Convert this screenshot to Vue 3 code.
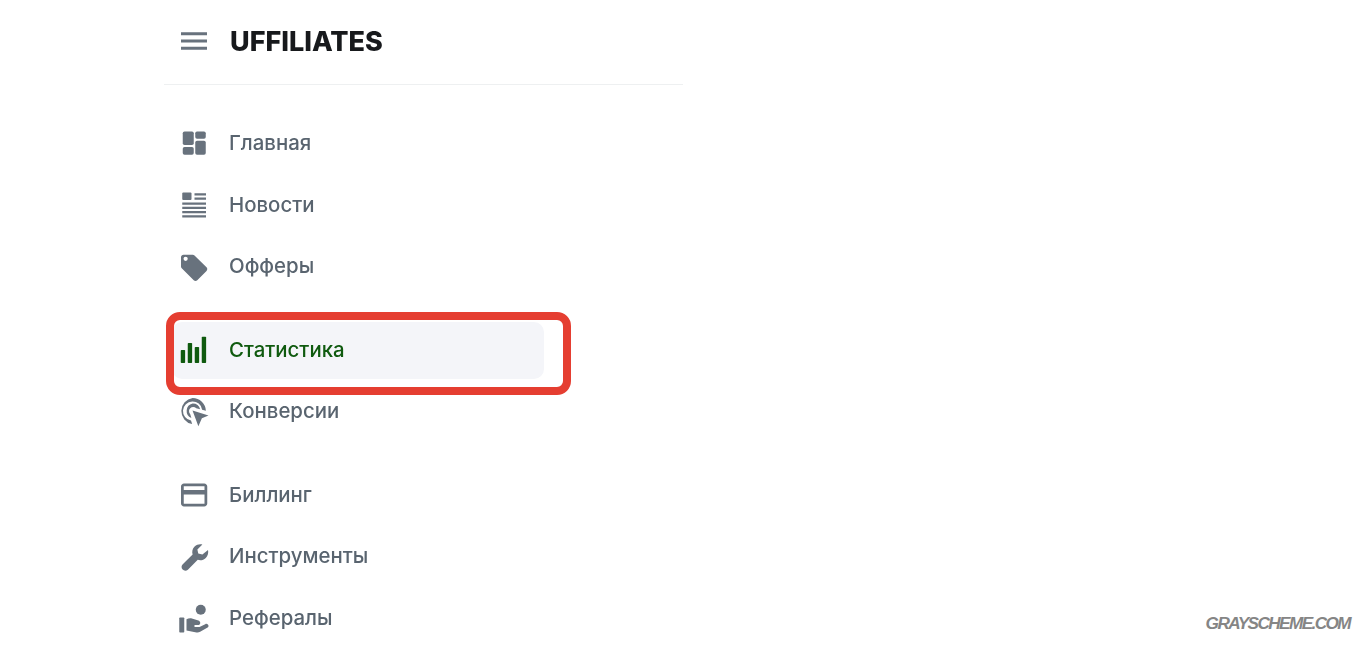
<template>
  <div class="page">
    <aside class="sidebar">
      <header class="top">
        <svg class="burger" viewBox="0 0 26 18" width="26" height="18">
          <path d="M0 1.800h26M0 9h26M0 16.200h26" stroke="#68727d" stroke-width="3" />
        </svg>
        <span class="logo">UFFILIATES</span>
      </header>

      <nav class="nav">
        <div v-for="(group, i) in groups" :key="i" class="group">
          <div
            v-for="item in group"
            :key="item.label"
            class="item"
            :class="{ active: item.active }"
          >
            <svg class="icon" viewBox="0 0 24 24" width="30" height="30" v-html="item.icon"></svg>
            <span>{{ item.label }}</span>
            <div v-if="item.active" class="frame"></div>
          </div>
        </div>
      </nav>
    </aside>
    <div class="mark">GRAYSCHEME.COM</div>
  </div>
</template>

<script setup>
const groups = [
  [
    {
      label: 'Главная',
      icon: '<rect x="3" y="2" width="8.800" height="10.800" rx="1.400"/><rect x="13" y="2" width="8.400" height="5.800" rx="1.400"/><rect x="3" y="14.400" width="8.800" height="6.200" rx="1.400"/><rect x="13" y="9.400" width="8.400" height="11.200" rx="1.400"/>'
    },
    {
      label: 'Новости',
      icon: '<rect x="2.600" y="2" width="7.400" height="6" rx=".8"/><path d="M12.400 2.600h9.200v1.800h-9.200zM12.400 6h9.200v1.800h-9.200zM2.600 10h19v1.800h-19zM2.600 13.400h19v1.800h-19zM2.600 16.800h19v1.800h-19zM2.600 20.200h19V22h-19z"/>'
    },
    {
      label: 'Офферы',
      icon: '<path d="M22 12.200 12.400 2.700c-.4-.4-.9-.6-1.400-.6H3.600C2.500 2.100 1.600 3 1.600 4.100v7.400c0 .5.2 1 .6 1.400l9.600 9.600c.4.4.9.6 1.400.6s1-.2 1.400-.6l7.400-7.400c.8-.8.8-2.100 0-2.900zM5.300 7.100a1.700 1.700 0 1 1 0-3.400 1.700 1.700 0 0 1 0 3.400z"/>'
    }
  ],
  [
    {
      label: 'Статистика',
      active: true,
      icon: '<rect x="1.400" y="12" width="3.500" height="10.400" rx=".6"/><rect x="7" y="6.400" width="3.500" height="16" rx=".6"/><rect x="12.600" y="9.600" width="3.500" height="12.800" rx=".6"/><rect x="18.200" y="1.400" width="3.500" height="21" rx=".6"/>'
    },
    {
      label: 'Конверсии',
      icon: '<path d="M10.900.8a10.600 10.600 0 0 1 10.600 10.200l-3-.9a7.700 7.700 0 1 0-8.900 8.700l.9 2.900A10.600 10.600 0 0 1 10.900.8z"/><path d="M10.900 5.200a6.100 6.100 0 0 1 6 4.600l-3.100-.9a3.200 3.200 0 1 0-4.800 4.800l.9 3.100a6.100 6.100 0 0 1 1-11.600z"/><path d="m10.800 10.800 12.800 3.900-5.300 2.300-2.800 6.400z"/>'
    }
  ],
  [
    {
      label: 'Биллинг',
      icon: '<path fill-rule="evenodd" d="M4 2.800h16.200c1.300 0 2.400 1.100 2.400 2.400v13.600c0 1.300-1.100 2.400-2.400 2.400H4c-1.300 0-2.400-1.100-2.400-2.400V5.200c0-1.300 1.100-2.400 2.400-2.400zm-.2 2.200v3h16.600V5zm0 6.600v7.400h16.600v-7.400z"/>'
    },
    {
      label: 'Инструменты',
      icon: '<path d="M23.200 6.400c.5 2.200-.1 4.600-1.800 6.300-1.800 1.800-4.300 2.300-6.400 1.500l-7.900 7.900c-1.200 1.100-3.100 1.100-4.200-.1-1.200-1.200-1.100-3.100.1-4.200l7.900-7.800c-.7-2.200-.2-4.700 1.600-6.400C14.200 1.900 16.500 1.400 18.700 1.900l-4 4 .7 3.300 3.300.7z"/>'
    },
    {
      label: 'Рефералы',
      icon: '<circle cx="17.400" cy="5.400" r="4"/><rect x=".2" y="11.600" width="4" height="12" rx=".6"/><path d="M6 12.400v9.700l8 1.500c1 .2 2 0 2.900-.5l6-3.400c.8-.5 1-1.700.2-2.500-.6-.6-1.400-.7-2.100-.3l-4.600 2.200h-4v-1.500h2.800c1.100 0 1.800-.8 1.800-1.700s-.7-1.600-1.500-1.900l-5.200-1.700c-1.400-.4-2.900-.1-4.300.7z"/>'
    }
  ]
]
</script>

<style>
html,
body {
  background: #fff;
}
</style>

<style scoped>
.page {
  position: relative;
  height: 654px;
  overflow: hidden;
  background: #fff;
  font-family: Inter, "Noto Sans", sans-serif;
}

.sidebar {
  width: 519px;
  margin-left: 164px;
}

.top {
  display: flex;
  align-items: center;
  height: 85px;
  padding: 0 0 2px 17px;
  box-sizing: border-box;
  border-bottom: 1.5px solid #eef0f1;
}

.burger {
  margin-right: 22px;
}

.logo {
  margin-left: 1px;
  font-size: 27px;
  font-weight: 800;
  letter-spacing: 0;
  color: #17191c;
  filter: blur(0.5px);
}

.nav {
  width: 372px;
  padding: 30px 0 0 8px;
}

.group {
  display: flex;
  flex-direction: column;
  gap: 4px;
  margin-bottom: 26px;
}

.item {
  position: relative;
  display: flex;
  align-items: center;
  height: 57.5px;
  padding-left: 7px;
  border-radius: 10px;
  font-size: 20.4px;
  font-weight: 500;
  color: #59646f;
}

.item span {
  margin: 0 0 2px 20px;
  filter: blur(0.4px);
}

.icon {
  flex: none;
  fill: #68727d;
  filter: blur(0.4px);
}

.active {
  background: #f4f5f9;
  color: #0f5a0f;
}

.active .icon {
  fill: #0f5a0f;
}

.frame {
  position: absolute;
  inset: -10px -27px -16px -6px;
  border: 8px solid #e53e31;
  border-radius: 14px;
}

.mark {
  position: absolute;
  right: 16px;
  bottom: 20px;
  font-family: "Liberation Sans", sans-serif;
  font-size: 17.2px;
  font-style: italic;
  font-weight: 700;
  letter-spacing: -1.6px;
  color: #858585;
}
</style>
